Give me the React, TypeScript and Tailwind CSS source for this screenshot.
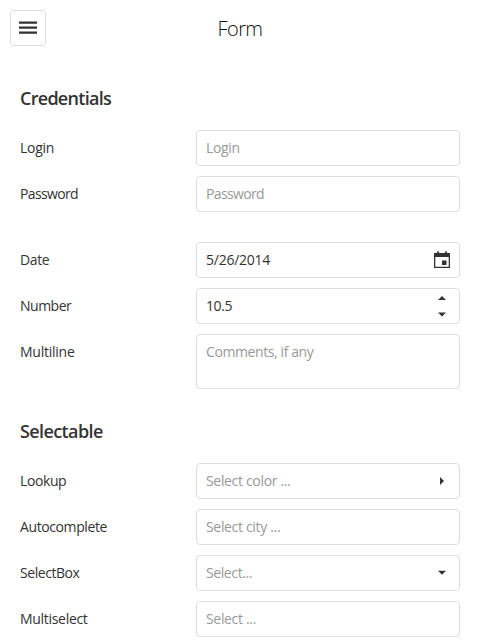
import React from "react";

type FieldProps = { label: string; children?: React.ReactNode; tall?: boolean; className?: string; spacing?: string };

function Field({ label, children, tall = false, className = "", spacing = "tracking-[-0.4px]" }: FieldProps) {
  return (
    <div className={`flex items-start ${className}`}>
      <div className={`w-[176px] shrink-0 text-[14px] leading-9 ${spacing}`}>{label}</div>
      <div className={`flex w-[264px] justify-between rounded-[4px] border border-[#ddd] pl-[9px] text-[14px] leading-[34px] ${tall ? "h-[55px]" : "h-9"}`}>{children}</div>
    </div>
  );
}

function Hint({ children, className = "tracking-[-0.33px]" }: { children: React.ReactNode; className?: string }) {
  return <span className={`text-[#999] ${className}`}>{children}</span>;
}

export default function App() {
  return (
    <main className="h-[640px] w-[480px] overflow-hidden bg-white font-['Open_Sans','Noto_Sans',sans-serif] text-[#333]">
      <header className="flex h-[56px] items-start px-[10px] pt-[10px]">
        <button className="flex h-9 w-9 items-center justify-center rounded-[4px] border border-[#ddd]" aria-label="Menu">
          <svg width="18" height="14" viewBox="0 0 18 14" fill="#333"><path d="M0 .4h18v2.3H0zM0 5.4h18v2.3H0zM0 10.4h18v2.3H0z" /></svg>
        </button>
        <h1 className="mr-9 flex-1 text-center text-[20px] leading-[38px] font-light tracking-[-0.6px] text-[#111]">Form</h1>
      </header>
      <div className="px-5 pt-7">
        <h2 className="h-[46px] text-[18px] leading-7 font-semibold tracking-[-0.72px]">Credentials</h2>
        <div className="flex flex-col gap-[10px]">
          <Field label="Login" spacing="tracking-[-0.3px]"><Hint>Login</Hint></Field>
          <Field label="Password" spacing="tracking-[-0.65px]"><Hint className="tracking-[-0.65px]">Password</Hint></Field>
          <Field label="Date" className="mt-5">
            <span className="tracking-[-0.25px]">5/26/2014</span>
            <svg className="mt-[8px] mr-[9px]" width="16" height="18" viewBox="1 0 16 18" fill="#333"><path fillRule="evenodd" d="M4 .5h2V2h6V.5h2V2h3v15H1V2h3zM2.3 6v9.8h13.4V6zM9 9.5h4.5V14H9z" /></svg>
          </Field>
          <Field label="Number" spacing="tracking-[-0.5px]">
            <span className="tracking-[-0.4px]">10.5</span>
            <svg className="mr-[13px]" width="8" height="34" viewBox="0 0 8 34" fill="#333"><path d="M0 11l4-4 4 4zM0 23.5h8l-4 4z" /></svg>
          </Field>
          <Field label="Multiline" tall spacing="tracking-[-0.25px]"><Hint className="tracking-[-0.4px]">Comments, if any</Hint></Field>
        </div>
        <h2 className="mt-7 h-[46px] text-[18px] leading-7 font-semibold tracking-[-0.6px]">Selectable</h2>
        <div className="flex flex-col gap-[10px]">
          <Field label="Lookup">
            <Hint>Select color ...</Hint>
            <svg className="mr-[15px]" width="4" height="34" viewBox="0 0 4 34" fill="#333"><path d="M0 13l4 4-4 4z" /></svg>
          </Field>
          <Field label="Autocomplete"><Hint>Select city ...</Hint></Field>
          <Field label="SelectBox" spacing="tracking-[-0.45px]">
            <Hint className="tracking-[-0.4px]">Select...</Hint>
            <svg className="mr-[13px]" width="8" height="34" viewBox="0 0 8 34" fill="#333"><path d="M0 14.7h8l-4 4z" /></svg>
          </Field>
          <Field label="Multiselect" spacing="tracking-[-0.3px]"><Hint>Select ...</Hint></Field>
        </div>
      </div>
    </main>
  );
}
